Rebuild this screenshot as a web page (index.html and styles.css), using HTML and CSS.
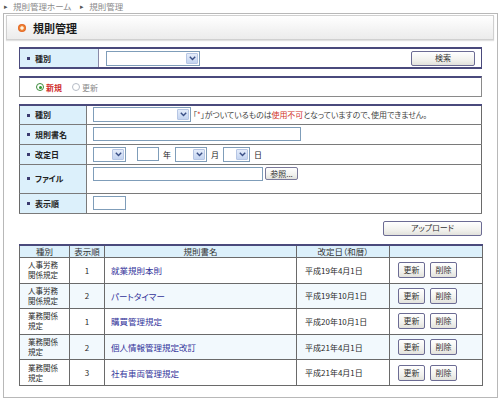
FILE: index.html
```html
<!DOCTYPE html>
<html lang="ja">
<head>
<meta charset="utf-8">
<title>規則管理</title>
<link rel="stylesheet" href="styles.css">
</head>
<body>
<div class="crumb">
  <span class="tri">&#9656;</span><span class="crumb-item">規則管理ホーム</span>
  <span class="tri">&#9656;</span><span class="crumb-item">規則管理</span>
</div>
<div class="frame">
  <div class="title"><span class="dot"></span>規則管理</div>
  <div class="content">
    <table class="search">
      <tr>
        <th class="lbl"><span class="bul"></span>種別</th>
        <td class="sel-cell"><span class="sel w94"><span class="arr"><svg width="7" height="5" viewBox="0 0 7 5"><path d="M0.8 0.8 L3.5 3.6 L6.2 0.8" fill="none" stroke="#3a4f86" stroke-width="1.4"/></svg></span></span></td>
        <td class="btn-cell"><button class="btn btn-search">検索</button></td>
      </tr>
    </table>

    <div class="mode">
      <label class="radio on"><span class="rb"><span class="rdot"></span></span><span class="rtext">新規</span></label>
      <label class="radio off"><span class="rb"></span><span class="rtext">更新</span></label>
    </div>

    <table class="form">
      <tr class="r1">
        <th class="lbl"><span class="bul"></span>種別</th>
        <td>
          <div class="line">
            <span class="sel w98"><span class="arr"><svg width="7" height="5" viewBox="0 0 7 5"><path d="M0.8 0.8 L3.5 3.6 L6.2 0.8" fill="none" stroke="#3a4f86" stroke-width="1.4"/></svg></span></span>
            <span class="note">「<span class="red">*</span>」がついているものは<span class="red">使用不可</span>となっていますので、使用できません。</span>
          </div>
        </td>
      </tr>
      <tr class="r2">
        <th class="lbl"><span class="bul"></span>規則書名</th>
        <td><span class="inp w208"></span></td>
      </tr>
      <tr class="r3">
        <th class="lbl"><span class="bul"></span>改定日</th>
        <td>
          <div class="line date">
            <span class="sel w33"><span class="arr"><svg width="7" height="5" viewBox="0 0 7 5"><path d="M0.8 0.8 L3.5 3.6 L6.2 0.8" fill="none" stroke="#3a4f86" stroke-width="1.4"/></svg></span></span>
            <span class="inp w22 ml10"></span><span class="unit">年</span>
            <span class="sel w32"><span class="arr"><svg width="7" height="5" viewBox="0 0 7 5"><path d="M0.8 0.8 L3.5 3.6 L6.2 0.8" fill="none" stroke="#3a4f86" stroke-width="1.4"/></svg></span></span><span class="unit">月</span>
            <span class="sel w27"><span class="arr"><svg width="7" height="5" viewBox="0 0 7 5"><path d="M0.8 0.8 L3.5 3.6 L6.2 0.8" fill="none" stroke="#3a4f86" stroke-width="1.4"/></svg></span></span><span class="unit">日</span>
          </div>
        </td>
      </tr>
      <tr class="r4">
        <th class="lbl"><span class="bul"></span>ファイル</th>
        <td class="top">
          <div class="line">
            <span class="inp w170"></span><button class="btn btn-ref">参照...</button>
          </div>
        </td>
      </tr>
      <tr class="r5">
        <th class="lbl"><span class="bul"></span>表示順</th>
        <td><span class="inp w33"></span></td>
      </tr>
    </table>

    <div class="upload-row"><button class="btn btn-upload">アップロード</button></div>

    <table class="list">
      <colgroup>
        <col class="c1"><col class="c2"><col class="c3"><col class="c4"><col class="c5">
      </colgroup>
      <thead>
        <tr><th>種別</th><th>表示順</th><th>規則書名</th><th>改定日（和暦）</th><th></th></tr>
      </thead>
      <tbody>
        <tr>
          <td class="kind"><span class="kl">人事労務</span><span class="kl">関係規定</span></td><td class="num">1</td>
          <td class="name"><a href="#">就業規則本則</a></td><td class="date">平成19年4月1日</td>
          <td class="ops"><button class="btn btn-sm">更新</button><button class="btn btn-sm">削除</button></td>
        </tr>
        <tr class="alt">
          <td class="kind"><span class="kl">人事労務</span><span class="kl">関係規定</span></td><td class="num">2</td>
          <td class="name"><a href="#">パートタイマー</a></td><td class="date">平成19年10月1日</td>
          <td class="ops"><button class="btn btn-sm">更新</button><button class="btn btn-sm">削除</button></td>
        </tr>
        <tr>
          <td class="kind"><span class="kl">業務関係</span><span class="kl">規定</span></td><td class="num">1</td>
          <td class="name"><a href="#">購買管理規定</a></td><td class="date">平成20年10月1日</td>
          <td class="ops"><button class="btn btn-sm">更新</button><button class="btn btn-sm">削除</button></td>
        </tr>
        <tr class="alt">
          <td class="kind"><span class="kl">業務関係</span><span class="kl">規定</span></td><td class="num">2</td>
          <td class="name"><a href="#">個人情報管理規定改訂</a></td><td class="date">平成21年4月1日</td>
          <td class="ops"><button class="btn btn-sm">更新</button><button class="btn btn-sm">削除</button></td>
        </tr>
        <tr>
          <td class="kind"><span class="kl">業務関係</span><span class="kl">規定</span></td><td class="num">3</td>
          <td class="name"><a href="#">社有車両管理規定</a></td><td class="date">平成21年4月1日</td>
          <td class="ops"><button class="btn btn-sm">更新</button><button class="btn btn-sm">削除</button></td>
        </tr>
      </tbody>
    </table>
  </div>
</div>
</body>
</html>
```

FILE: styles.css
```css
* { box-sizing: border-box; }

html, body {
  margin: 0;
  padding: 0;
  background: #fff;
}

body {
  width: 500px;
  height: 408px;
  overflow: hidden;
  font-family: "Noto Sans CJK JP", "Noto Sans", sans-serif;
  font-size: 8px;
  color: #2a2a2a;
  font-feature-settings: "palt";
}

/* breadcrumb */
.crumb {
  height: 13px;
  display: flex;
  align-items: center;
  padding-left: 4px;
  color: #8a8a8a;
  font-size: 8.5px;
  line-height: 1;
}
.crumb .tri {
  font-size: 7px;
  color: #555;
  margin-right: 5px;
}
.crumb .crumb-item { margin-right: 9px; }

/* outer frame */
.frame {
  margin-left: 3px;
  width: 495px;
  height: 385px;
  border: 1px solid #b8b8b8;
}

.title {
  margin: 1px 3px 0 2px;
  height: 25px;
  border: 1px solid #d0d0d0;
  background: linear-gradient(#ffffff, #f3f3f3 60%, #ececec);
  display: flex;
  align-items: center;
  padding-left: 11px;
  font-size: 11px;
  font-weight: bold;
  color: #1a1a1a;
  box-shadow: 0 1px 1px #e2e2e2;
}
.dot {
  width: 8px;
  height: 8px;
  border-radius: 50%;
  background: radial-gradient(circle, #fff3e0 0 22%, #f08a3c 38%, #e2601c 70%);
  margin-right: 7px;
}

.content {
  padding: 7px 15px 0 15px;
}

/* common table look */
table {
  border-collapse: collapse;
  width: 463px;
}
.lbl {
  background: #dcf0fb;
  text-align: left;
  font-weight: bold;
  color: #222;
  font-size: 8px;
  padding: 0 0 0 7px;
  white-space: nowrap;
}
.bul {
  display: inline-block;
  width: 3px;
  height: 3px;
  background: #3c3c70;
  vertical-align: middle;
  margin-right: 5px;
  position: relative;
  top: -1px;
}

/* search */
.search {
  border-top: 2px solid #4a4a7c;
  border-bottom: 2px solid #4a4a7c;
  border-left: 1px solid #4a4a7c;
  border-right: 1px solid #4a4a7c;
  height: 22px;
}
.search .lbl {
  width: 79px;
  border-right: 1px solid #8a8aa8;
}
.search .sel-cell { padding-left: 7px; }
.search .btn-cell {
  text-align: right;
  padding-right: 6px;
}

/* fake form controls */
.sel {
  display: inline-flex;
  justify-content: flex-end;
  height: 15px;
  border: 1px solid #7f9db9;
  background: #fff;
  vertical-align: middle;
  padding: 1px;
}
.arr {
  width: 12px;
  height: 100%;
  background: linear-gradient(#e4ecfa, #c4d4f0);
  border: 1px solid #b6c6e4;
  border-radius: 1px;
  display: flex;
  align-items: center;
  justify-content: center;
}
.inp {
  display: inline-block;
  height: 14px;
  border: 1px solid #7f9db9;
  background: #fff;
  vertical-align: middle;
}
.w94 { width: 94px; }
.w98 { width: 98px; }
.w33 { width: 33px; }
.w32 { width: 32px; }
.w27 { width: 27px; }
.w22 { width: 22px; }
.w208 { width: 208px; }
.w170 { width: 170px; }
.ml10 { margin-left: 11px; }

.btn {
  font-family: inherit;
  font-feature-settings: "palt";
  font-size: 8px;
  color: #333;
  border: 1px solid #6c6c94;
  border-radius: 2px;
  background: linear-gradient(#ffffff, #f2f2ee 60%, #e2e2dc);
  padding: 0;
  margin: 0;
  line-height: 1;
  cursor: pointer;
}
.btn-search {
  width: 64px;
  height: 15px;
}
.btn-ref {
  width: 33px;
  height: 13px;
  margin-left: 2px;
  border-color: #7a7a9a;
}
.btn-upload {
  width: 99px;
  height: 15px;
}
.btn-sm {
  width: 27px;
  height: 16px;
}

/* radio box */
.mode {
  margin-top: 7px;
  height: 21px;
  border: 1px solid #8a8a8a;
  border-top: 2px solid #4a4a7c;
  display: flex;
  align-items: center;
  padding-left: 16px;
  gap: 10px;
}
.radio {
  display: flex;
  align-items: center;
  gap: 2px;
  font-size: 8px;
}
.rb {
  width: 8px;
  height: 8px;
  border-radius: 50%;
  border: 1px solid #b6bcc6;
  background: #fff;
  display: flex;
  align-items: center;
  justify-content: center;
}
.radio.on .rb { border-color: #3c8a3c; }
.rdot {
  width: 3px;
  height: 3px;
  border-radius: 50%;
  background: #2e9a2e;
}
.radio.on .rtext { color: #d02a2a; font-weight: bold; }
.radio.off .rtext { color: #8a8a8a; }

/* form */
.form {
  margin-top: 7px;
  border-top: 2px solid #4a4a7c;
  border-left: 1px solid #6a6a6a;
  border-right: 1px solid #6a6a6a;
  border-bottom: 1px solid #6a6a6a;
}
.form th, .form td {
  border-bottom: 1px solid #7a7a7a;
}
.form .lbl {
  width: 67px;
  border-right: 1px solid #7a7a7a;
}
.form td {
  padding: 0 0 0 6px;
  vertical-align: middle;
}
.form td.top { vertical-align: top; padding-top: 2px; }
.form .r1 > * { height: 19px; }
.form .r2 > * { height: 20px; }
.form .r3 > * { height: 20px; }
.form .r4 > * { height: 29px; }
.form .r5 > * { height: 20px; }
.line {
  display: flex;
  align-items: center;
  white-space: nowrap;
}
.note {
  margin-left: 2px;
  font-size: 8px;
  color: #444;
  letter-spacing: -0.1px;
}
.red { color: #d0341e; }
.unit {
  margin: 0 4px 0 4px;
  color: #222;
}

.upload-row {
  margin-top: 7px;
  display: flex;
  justify-content: flex-end;
}

/* list */
.list {
  margin-top: 8px;
  table-layout: fixed;
  border-top: 2px solid #4a4a7c;
  border-left: 1px solid #5a5a5a;
  border-right: 1px solid #5a5a5a;
  border-bottom: 1px solid #5a5a5a;
}
.list col.c1 { width: 50px; }
.list col.c2 { width: 35px; }
.list col.c3 { width: 192px; }
.list col.c4 { width: 93px; }
.list col.c5 { width: 93px; }
.list th {
  background: #dcf0fb;
  font-weight: normal;
  color: #333;
  height: 13px;
  padding: 0;
  font-size: 8.5px;
  border: 1px solid #6a6a6a;
  line-height: 1;
}
.list td {
  height: 25.6px;
  padding: 0;
  border: 1px solid #6a6a6a;
  color: #2a2a2a;
  font-size: 8px;
  vertical-align: middle;
}
.list tr.alt td { background: #f2f9fd; }
.list td.kind {
  padding-left: 8px;
  font-size: 7.5px;
}
.list td.kind .kl {
  display: block;
  line-height: 10px;
}
.list td.num { text-align: center; }
.list td.name { padding-left: 6px; font-size: 8.5px; }
.list td.name a {
  color: #33339a;
  text-decoration: none;
}
.list td.date { padding-left: 8px; }
.list td.ops {
  padding-left: 8px;
  white-space: nowrap;
}
.list td.ops .btn + .btn { margin-left: 5px; }
```
